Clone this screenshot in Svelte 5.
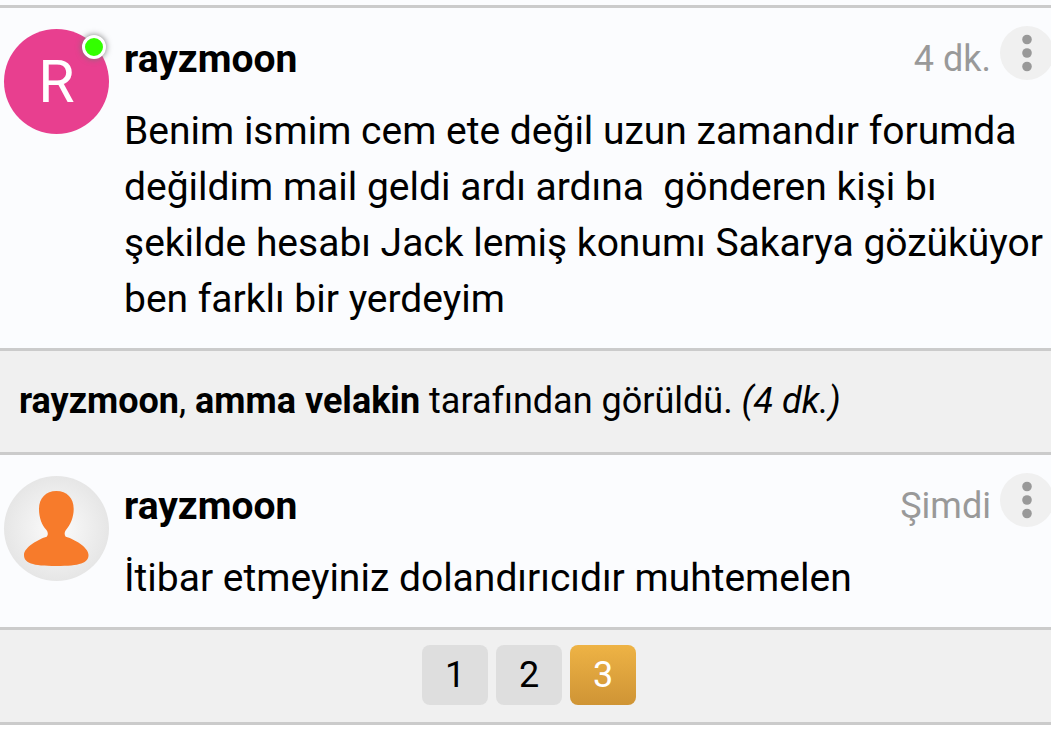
<script>
  const posts = [
    {
      user: 'rayzmoon', letter: 'R', online: true, time: '4 dk.',
      text: 'Benim ismim cem ete değil uzun zamandır forumda değildim mail geldi ardı ardına\u00a0 gönderen kişi bı şekilde hesabı Jack lemiş konumı Sakarya gözüküyor ben farklı bir yerdeyim'
    },
    { user: 'rayzmoon', time: 'Şimdi', text: 'İtibar etmeyiniz dolandırıcıdır muhtemelen' }
  ];
  const pages = [1, 2, 3];
  let current = $state(3);
</script>

{#snippet message(post)}
  <article>
    <div class="avatar" class:letter={post.letter}>
      {#if post.letter}
        <span>{post.letter}</span>
      {:else}
        <svg viewBox="0 0 105 105" aria-hidden="true">
          <path fill="#f77b2b" d="M52.3 15C42 15 35 22 35 33C35 42 38 49 42 53.500C44 55.500 44.500 59 42.700 60.700C35 63 20 71 20 79C20 87 28 90 52.300 90C76 90 84.500 87 84.500 79C84.500 71 70 63 61.700 60.700C60 59 60.500 55.500 62.300 53.500C66 49 69.700 42 69.700 33C69.700 22 63 15 52.300 15Z" />
        </svg>
      {/if}
      {#if post.online}<i class="online"></i>{/if}
    </div>
    <div class="body">
      <header>
        <h2>{post.user}</h2>
        <time>{post.time}</time>
        <button class="more" aria-label="Menü">
          <svg viewBox="0 0 54 54" aria-hidden="true"><g fill="#999"><circle cx="27" cy="13.500" r="4.800" /><circle cx="27" cy="27" r="4.800" /><circle cx="27" cy="40.500" r="4.800" /></g></svg>
        </button>
      </header>
      <p>{post.text}</p>
    </div>
  </article>
{/snippet}

<main>
  {@render message(posts[0])}
  <div class="seen"><b>rayzmoon</b>, <b>amma velakin</b> tarafından görüldü. <em>(4 dk.)</em></div>
  {@render message(posts[1])}
  <nav aria-label="Sayfalar">
    {#each pages as page}
      <button class:active={page === current} onclick={() => (current = page)}>{page}</button>
    {/each}
  </nav>
</main>

<style>
  :global(body) { background: #fff; overflow-x: hidden; }
  main { padding-top: 5px; background: #fbfcfe; font-family: Roboto, sans-serif; font-size: 39px; color: #000; }
  article { display: flex; gap: 15px; padding: 21px 0 21px 4px; border-top: 3px solid #cbcbcb; }
  .avatar { position: relative; flex: none; width: 105px; height: 105px; border-radius: 50%; background: radial-gradient(closest-side, #fcfcfc, #e6e6e6); }
  .letter { display: flex; align-items: center; justify-content: center; background: #e83f8f; color: #fff; font-size: 59px; }
  .avatar svg { display: block; width: 100%; }
  .online { position: absolute; top: 6px; right: 3px; width: 18px; height: 18px; border: 3px solid #fff; border-radius: 50%; background: #3f0; box-shadow: 0 0 6px #777; }
  .body { flex: 1; min-width: 0; }
  header { display: flex; align-items: center; height: 60px; }
  h2 { margin: 0; flex: 1; font-size: 39px; font-weight: 700; }
  time { color: #999; font-size: 36px; }
  .more { flex: none; align-self: flex-start; width: 54px; height: 54px; margin: -3px -3px 0 9px; padding: 0; border: 0; border-radius: 50%; background: #f0f0f0; }
  .more svg { display: block; width: 100%; }
  p { margin: 14px 0 0; line-height: 56px; }
  .seen { padding: 19px 19px 20px; border-top: 3px solid #cbcbcb; background: #f0f0f0; line-height: 62px; font-size: 36px; }
  nav { display: flex; justify-content: center; gap: 8px; padding: 15px 0 17px 7px; border: solid #cbcbcb; border-width: 3px 0; background: #f0f0f0; }
  nav button { width: 66px; height: 60px; padding: 0; border: 0; border-radius: 8px; background: #dedede; color: #000; font: 36px Roboto, sans-serif; }
  nav .active { background: linear-gradient(#eeb345, #cf9435); color: #fff; }
</style>
